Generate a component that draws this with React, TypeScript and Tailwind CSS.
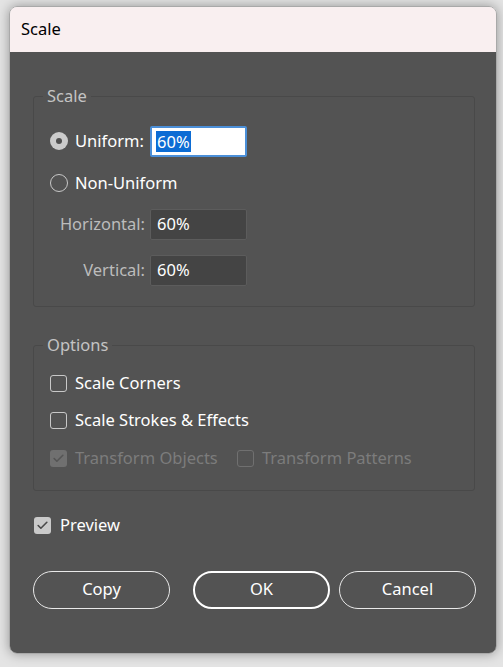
import { Check } from "lucide-react";

const font = { fontFamily: '"Noto Sans", "Open Sans", sans-serif' };

function Radio({ checked }: { checked?: boolean }) {
  if (checked) {
    return (
      <span className="flex h-[18px] w-[18px] items-center justify-center rounded-full bg-[#cbcbcb]">
        <span className="h-[6px] w-[6px] rounded-full bg-[#505050]" />
      </span>
    );
  }
  return <span className="h-[18px] w-[18px] rounded-full border-[1.5px] border-[#c8c8c8]" />;
}

function Box({ checked, disabled }: { checked?: boolean; disabled?: boolean }) {
  if (checked) {
    return (
      <span
        className={
          disabled
            ? "flex h-[17px] w-[17px] items-center justify-center rounded-[3px] bg-[#707070]"
            : "flex h-[17px] w-[17px] items-center justify-center rounded-[3px] bg-[#cacaca]"
        }
      >
        <Check size={13} strokeWidth={3} className={disabled ? "text-[#555555]" : "text-[#4a4a4a]"} />
      </span>
    );
  }
  return (
    <span
      className={
        disabled
          ? "h-[17px] w-[17px] rounded-[3px] border border-[#707070]"
          : "h-[17px] w-[17px] rounded-[3px] border border-[#c8c8c8]"
      }
    />
  );
}

function Field({ selected }: { selected?: boolean }) {
  if (selected) {
    return (
      <div className="flex h-[31px] w-[97px] items-center rounded-[2px] border-2 border-[#4b8fd8] bg-white px-[4px]">
        <span className="bg-[#0c6cd4] px-[1px] text-[16.5px] leading-[21px] text-white">60%</span>
      </div>
    );
  }
  return (
    <div className="flex h-[31px] w-[97px] items-center rounded-[2px] border border-[#5c5c5c] bg-[#444444] px-[6px] text-[16.5px] text-white">
      60%
    </div>
  );
}

function Button({ label, primary }: { label: string; primary?: boolean }) {
  return (
    <button
      className={
        primary
          ? "flex h-[38px] w-[137px] shrink-0 items-center justify-center rounded-full border-[2.5px] border-white text-[16.5px] text-white"
          : "flex h-[38px] w-[137px] shrink-0 items-center justify-center rounded-full border-[1.5px] border-[#e8e8e8] text-[16.5px] text-white"
      }
    >
      {label}
    </button>
  );
}

export default function App() {
  return (
    <div className="h-[667px] w-[503px] bg-[#e4e4e4] pl-[9px] pt-[6px]" style={font}>
      <div className="flex h-[648px] w-[488px] flex-col overflow-hidden rounded-[8px] border border-[#a9a9a9] shadow-[0_0_12px_rgba(0,0,0,0.35)]">
        {/* barra de título */}
        <div className="flex h-[45px] items-center bg-[#f9eff0] pl-[11px] text-[16.5px] text-black">Scale</div>

        <div className="flex flex-1 flex-col bg-[#535353] pl-[23px] pr-[20px] pt-[32px]">
          {/* grupo Scale */}
          <fieldset className="w-[442px] rounded-[3px] border border-[#494949] pb-[20px] pl-[16px]">
            <legend className="-ml-[7px] px-[4px] text-[16.5px] text-[#c4c4c4]">Scale</legend>
            <div className="mt-[17px] flex h-[31px] items-center">
              <div className="flex w-[100px] items-center gap-[7px]">
                <Radio checked />
                <span className="text-[16.5px] text-white">Uniform:</span>
              </div>
              <Field selected />
            </div>
            <div className="mt-[11px] flex h-[31px] items-center gap-[7px]">
              <Radio />
              <span className="text-[16.5px] text-white">Non-Uniform</span>
            </div>
            <div className="mt-[10px] flex h-[31px] items-center">
              <span className="w-[100px] pr-[5px] text-right text-[16.5px] text-[#bcbcbc]">Horizontal:</span>
              <Field />
            </div>
            <div className="mt-[15px] flex h-[31px] items-center">
              <span className="w-[100px] pr-[5px] text-right text-[16.5px] text-[#bcbcbc]">Vertical:</span>
              <Field />
            </div>
          </fieldset>

          {/* grupo Options */}
          <fieldset className="mt-[26px] w-[442px] rounded-[3px] border border-[#494949] pb-[19px] pl-[16px]">
            <legend className="-ml-[7px] px-[4px] text-[16.5px] text-[#c4c4c4]">Options</legend>
            <div className="mt-[14px] flex h-[24px] items-center gap-[8px]">
              <Box />
              <span className="text-[16.5px] text-white">Scale Corners</span>
            </div>
            <div className="mt-[13px] flex h-[24px] items-center gap-[8px]">
              <Box />
              <span className="text-[16.5px] text-white">Scale Strokes &amp; Effects</span>
            </div>
            <div className="mt-[14px] flex h-[24px] items-center">
              <div className="flex w-[187px] items-center gap-[8px]">
                <Box checked disabled />
                <span className="text-[16.5px] text-[#7c7c7c]">Transform Objects</span>
              </div>
              <div className="flex items-center gap-[8px]">
                <Box disabled />
                <span className="text-[16.5px] text-[#7c7c7c]">Transform Patterns</span>
              </div>
            </div>
          </fieldset>

          <div className="mt-[23px] flex h-[24px] items-center gap-[9px] pl-[1px]">
            <Box checked />
            <span className="text-[16.5px] text-white">Preview</span>
          </div>

          <div className="mt-[33px] flex">
            <Button label="Copy" />
            <div className="ml-[23px] flex gap-[9px]">
              <Button label="OK" primary />
              <Button label="Cancel" />
            </div>
          </div>
        </div>
      </div>
    </div>
  );
}
